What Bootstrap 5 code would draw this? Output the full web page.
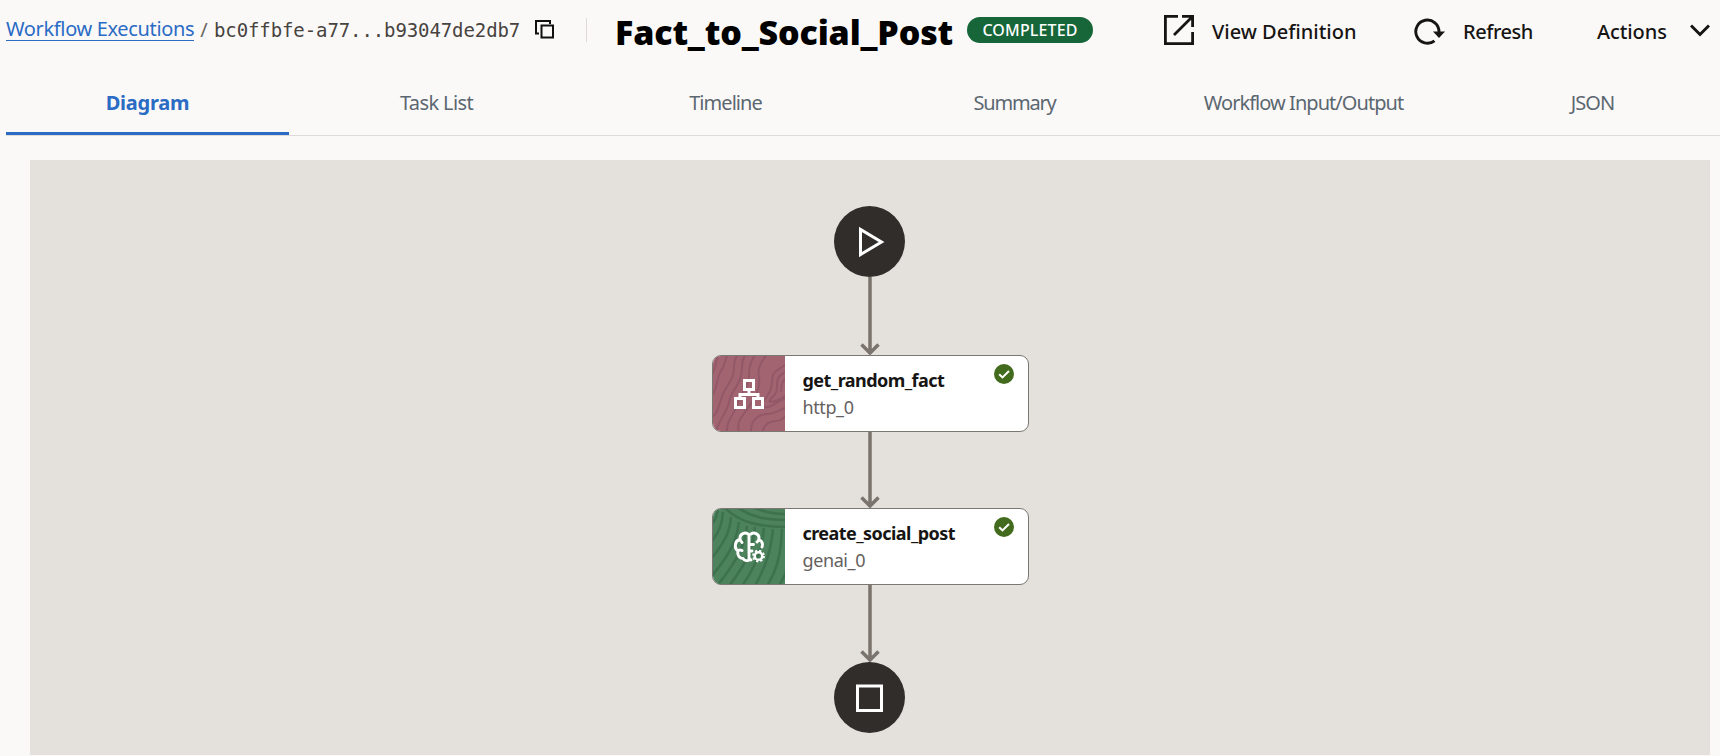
<!DOCTYPE html>
<html lang="en">
<head>
<meta charset="utf-8">
<meta name="viewport" content="width=device-width, initial-scale=1">
<title>Fact_to_Social_Post</title>
<link rel="stylesheet" href="https://cdn.jsdelivr.net/npm/bootstrap@5.3.0/dist/css/bootstrap.min.css">
<style>
  body { background: #fbf9f8; color: #161513; font-family: "Noto Sans", "Open Sans", sans-serif; font-size: 20px; height: 756px; overflow: hidden; }
  svg { display: block; flex: none; }
  .topbar { height: 60px; padding-left: 6px; white-space: nowrap; }
  .crumb { width: 188px; color: #2a6bc4; letter-spacing: -.35px; text-decoration: none; line-height: 22px; border-bottom: 1px solid #2a6bc4; height: 23px; margin-top: -1px; }
  .slash { width: 20px; color: #6b6864; text-align: center; }
  .run-id { width: 307px; font-family: "DejaVu Sans Mono", monospace; font-size: 19px; letter-spacing: -.1px; color: #474340; }
  .rule { width: 1px; height: 24px; background: #dcd9d6; margin-left: 32px; margin-top: 0; }
  .title { width: 352px; margin: 4px 0 0 28px; font-size: 34px; font-weight: 900; line-height: 40px; color: #000; letter-spacing: -.15px; }
  .state { width: 126px; height: 26px; background: #176639; font-size: 16px; font-weight: 500; letter-spacing: .15px; line-height: 27px; padding: 0; margin-top: 0; }
  .action { color: #161513; font-weight: 500; letter-spacing: -.45px; margin-top: 3px; }
  .tabs { display: grid; grid-template-columns: repeat(6, 283px); gap: 6px; margin-left: 6px; width: 1714px; height: 76px; border-bottom: 1px solid #dedcda; overflow: hidden; }
  .tabs .nav-link { color: #5b6770; letter-spacing: -.95px; text-align: center; padding: 28px 0 0; line-height: 30px; border-bottom: 3px solid transparent; }
  .tabs .nav-link.active { color: #2a6bc4; font-weight: 700; border-color: #2a6bc4; letter-spacing: -.25px; }
  .board { background: #e4e1dc; margin: 24px 10px 0 30px; height: 595px; padding-top: 46px; }
  .wire { height: 76px; }
  .task { width: 317px; height: 77px; border: 1px solid #7b7874; border-radius: 9px; background: #fff; overflow: hidden; }
  .task-text { padding: 12px 0 0 18px; letter-spacing: -.4px; width: 205px; }
  .task-name { font-size: 18px; font-weight: 700; line-height: 25px; letter-spacing: -.55px; white-space: nowrap; }
  .task-ref { font-size: 18px; line-height: 29px; color: #65615e; }
  .terminal { margin-right: 2px; }
</style>
</head>
<body>
<header class="topbar d-flex align-items-center">
  <a class="crumb" href="#">Workflow Executions</a>
  <span class="slash">/</span>
  <span class="run-id">bc0ffbfe-a77...b93047de2db7</span>
  <svg style="margin:-2px 0 0 14px" width="19" height="19" viewBox="0 0 19 19" fill="none" stroke="#111" stroke-width="2"><path d="M4 13.500H1V1h14v3M6.500 5.500h11.500v12H6.500z"/></svg>
  <span class="rule"></span>
  <h1 class="title mb-0">Fact_to_Social_Post</h1>
  <span class="state badge rounded-pill">COMPLETED</span>
  <svg style="margin-left:71px" width="30" height="30" viewBox="0 0 30 30" fill="none" stroke="#161513" stroke-width="2.800"><path d="M14 1.400H1.400v27.200h27.200V17M18 1.400h10.600V12M28.500 1.500 10 20"/></svg>
  <span class="action" style="margin-left:18px;width:202px;letter-spacing:0">View Definition</span>
  <svg style="margin-top:2px" width="31" height="28" viewBox="0 0 31 28" fill="none" stroke="#161513" stroke-width="2.900"><path d="M20.500 23.800A11.600 11.600 0 1 1 25 15"/><path d="M19 14.500h12L25 21z" fill="#161513" stroke="none"/></svg>
  <span class="action" style="margin-left:18px;width:134px">Refresh</span>
  <span class="action" style="width:93px;letter-spacing:-.1px">Actions</span>
  <svg width="20" height="13" viewBox="0 0 20 13" fill="none" stroke="#161513" stroke-width="3"><path d="m1 1.500 9 9 9-9"/></svg>
</header>
<nav class="tabs">
  <a class="nav-link active" href="#">Diagram</a>
  <a class="nav-link" style="letter-spacing:-.6px" href="#">Task List</a>
  <a class="nav-link" href="#">Timeline</a>
  <a class="nav-link" style="letter-spacing:-1.200px" href="#">Summary</a>
  <a class="nav-link" href="#">Workflow Input/Output</a>
  <a class="nav-link" href="#">JSON</a>
</nav>
<main class="board d-flex flex-column align-items-center">
  <svg class="terminal" width="71" height="71" viewBox="0 0 71 71"><circle cx="35.500" cy="35.500" r="35.500" fill="#312d2a"/><path d="M26.500 23.500v25L47.500 36z" fill="none" stroke="#fff" stroke-width="3"/></svg>
  <svg class="wire" style="height:78px" width="20" height="78" viewBox="0 0 20 78" fill="none" stroke="#7a736e" stroke-width="3.500"><path d="M10 0v76M1.500 67.500 10 76l8.500-8.500"/></svg>
  <section class="task d-flex">
    <svg width="72" height="75" viewBox="0 0 72 75" fill="none">
      <path fill="#a36472" d="M0 0h72v75H0z"/>
      <g stroke="#925867" stroke-width="2">
        <path d="M-2 20C3 15 1 8 6-2M-2 40C5 34 3 22 8 15S11 5 15-2M-2 62c8-5 8-15 12-24s8-12 10-19-1-13 5-21M3 77c2-13 10-18 13-31s10-16 12-26-1-14 5-22M14 77c-1-14 7-17 10-28s12-18 12-29 2-13 6-22M26 77c-3-13 4-17 9-25s13-18 11-30 3-16 8-24M38 77c-1-13 8-19 16-19s12-4 20-7M49 77c2-9 8-12 14-12s6-3 11-5M74 8c-14 8-15 10-15 18s-5 15-9 20 3 7 10 3 9-6 14-7M74 15c-11 6-10 9-10 17s-5 8-7 12 8 1 17-5M74 22c-7 4-5 8-6 14"/>
      </g>
      <g stroke="#fff" stroke-width="3"><path d="M31.500 24.500h9v9h-9zM22.500 42.500h9v9h-9zM40.500 42.500h9v9h-9z"/><path d="M36 35v3.500M27 41v-2.500h18V41"/></g>
    </svg>
    <div class="task-text"><div class="task-name">get_random_fact</div><div class="task-ref">http_0</div></div>
    <svg style="margin:8px 0 0 4px" width="20" height="20" viewBox="0 0 20 20"><circle cx="10" cy="10" r="10" fill="#436b1d"/><path d="m5.200 10.200 3.300 3.200L15 7" fill="none" stroke="#fff" stroke-width="2"/></svg>
  </section>
  <svg class="wire" width="20" height="76" viewBox="0 0 20 76" fill="none" stroke="#7a736e" stroke-width="3.500"><path d="M10 0v74M1.500 65.500 10 74l8.500-8.500"/></svg>
  <section class="task d-flex">
    <svg width="72" height="75" viewBox="0 0 72 75" fill="none">
      <path fill="#4c825c" d="M0 0h72v75H0z"/>
      <g stroke="#3e724e" stroke-width="2.600">
        <path d="M12-1c15 15 36 19 62 19M24-2c15 11 31 13 50 13M40-2c10 5 21 7 34 7M-2 16C3 11 4 6 5-1M-2 33C7 23 9 14 10 3M-2 50C12 33 17 22 18 8M-2 68C20 42 24 28 26 13M4 77C27 48 32 34 34 17M16 77C37 50 40 35 42 18M29 77C47 51 49 36 51 19M42 77C55 53 58 39 60 20M54 77C66 58 68 40 69 20M66 77c3-5 6-11 8-17"/>
      </g>
      <g stroke="#fff" stroke-width="2.900" stroke-linecap="round" stroke-linejoin="round">
        <path d="M35 25c-3-2-8-.500-8 4 0 2 .500 3.500 2 4.500M26.500 30.500c-5 1.500-5.500 9-1.500 11.500-1 5 2 7.500 5 7.500 1.500 2.500 4.500 2.500 6 1.500V25.500M38 25c3-2 8-.500 8 4 0 2-.500 3-2 4M46.500 31c3 1.500 3.500 4 2.500 7M36.500 35.500h4M25 42c1-1.500 3-1 4-.500M36 42h3M36 49.500l2 1.500"/>
      </g>
      <circle cx="45.500" cy="47" r="3.800" stroke="#fff" stroke-width="2.500"/><circle cx="45.500" cy="47" r="5.400" stroke="#fff" stroke-width="2" stroke-dasharray="2.200 2.040"/>
    </svg>
    <div class="task-text"><div class="task-name">create_social_post</div><div class="task-ref">genai_0</div></div>
    <svg style="margin:8px 0 0 4px" width="20" height="20" viewBox="0 0 20 20"><circle cx="10" cy="10" r="10" fill="#436b1d"/><path d="m5.200 10.200 3.300 3.200L15 7" fill="none" stroke="#fff" stroke-width="2"/></svg>
  </section>
  <svg class="wire" style="height:77px" width="20" height="77" viewBox="0 0 20 77" fill="none" stroke="#7a736e" stroke-width="3.500"><path d="M10 0v75M1.500 66.500 10 75l8.500-8.500"/></svg>
  <svg class="terminal" width="71" height="71" viewBox="0 0 71 71"><circle cx="35.500" cy="35.500" r="35.500" fill="#312d2a"/><path d="M23.500 24h24v24.500h-24z" fill="none" stroke="#fff" stroke-width="3"/></svg>
</main>
<script src="https://cdn.jsdelivr.net/npm/bootstrap@5.3.0/dist/js/bootstrap.bundle.min.js"></script>
</body>
</html>
